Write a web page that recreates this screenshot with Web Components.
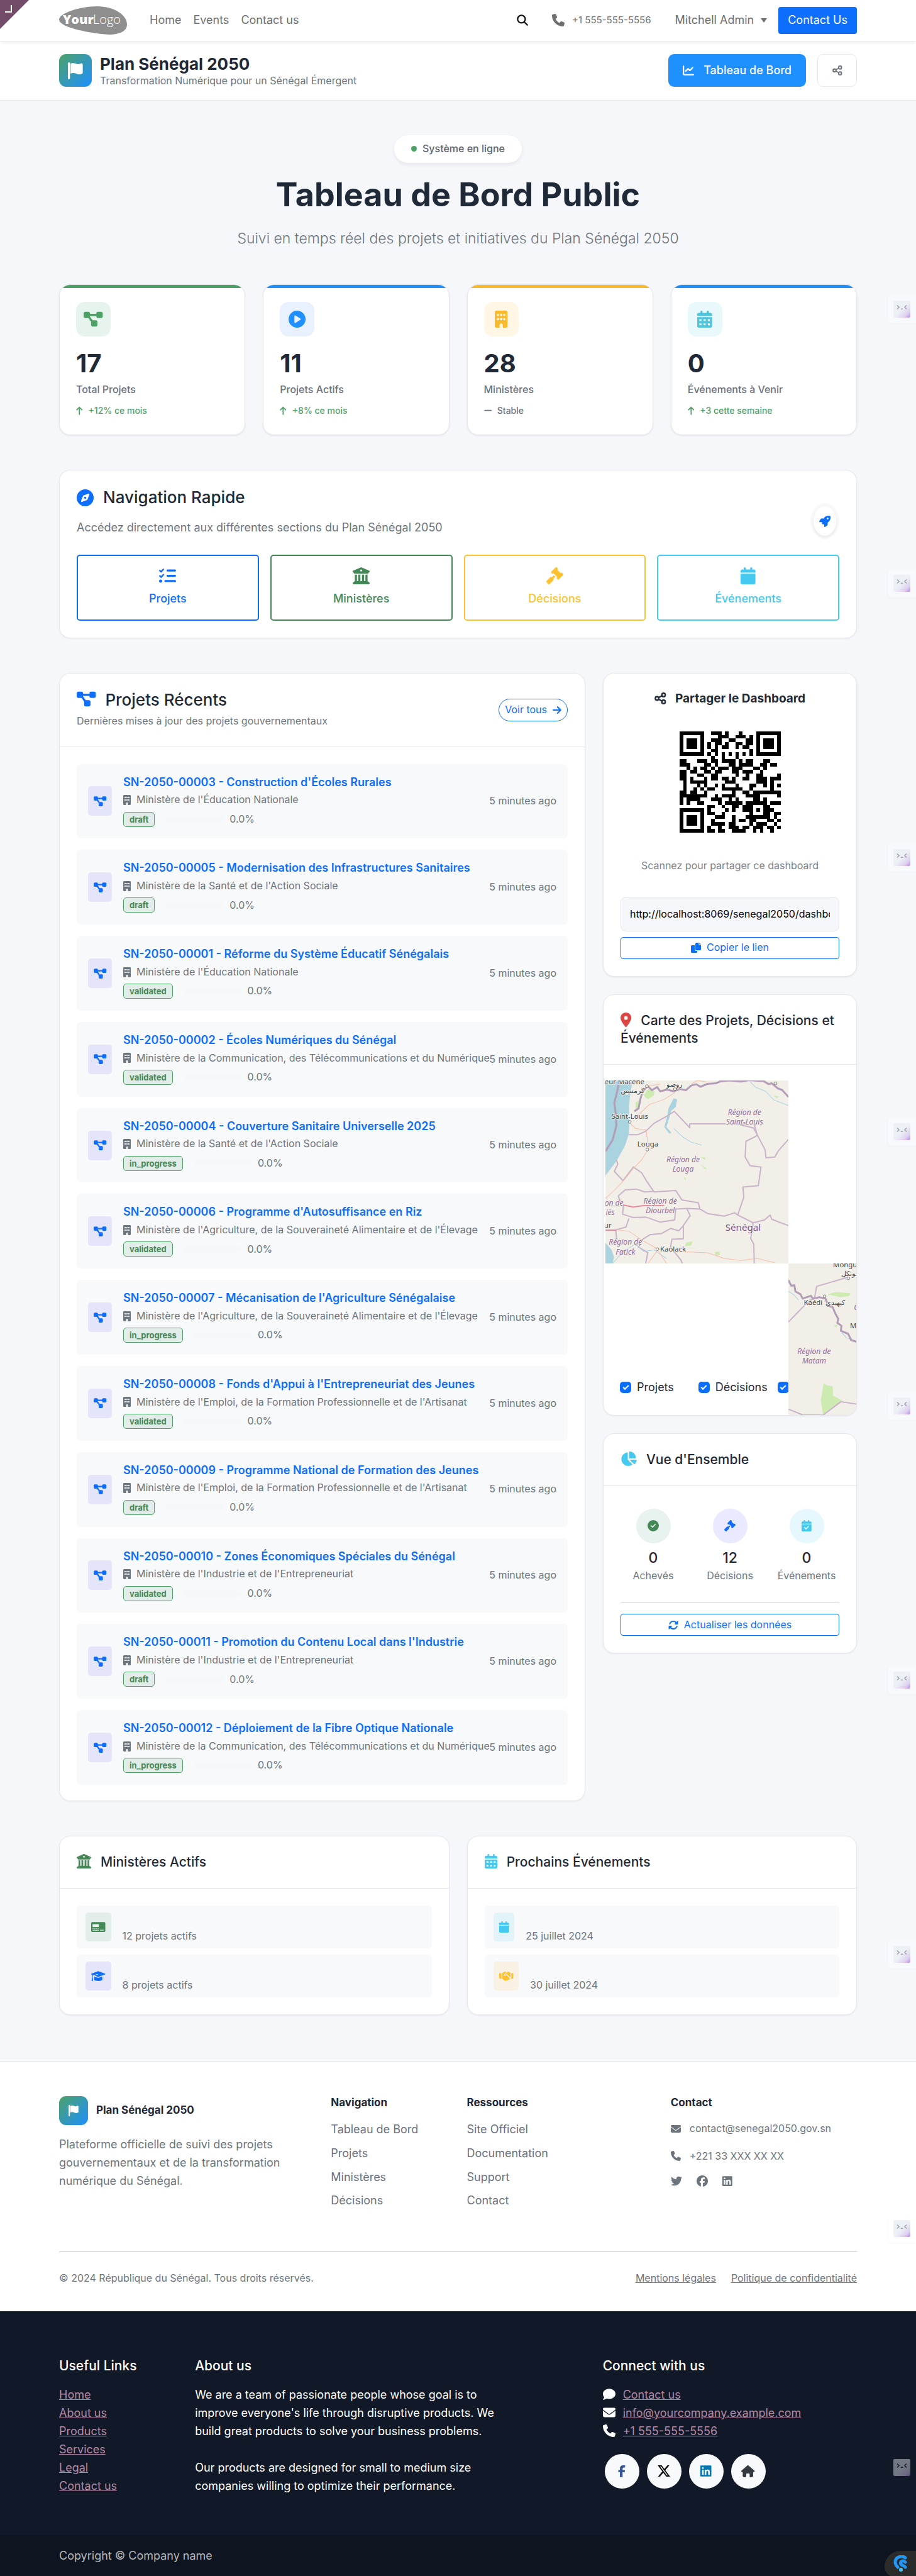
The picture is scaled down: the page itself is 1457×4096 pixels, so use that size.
<!DOCTYPE html>
<html lang="fr">
<head>
<meta charset="utf-8">
<meta name="viewport" content="width=device-width, initial-scale=1">
<title>Tableau de Bord Public - Plan Sénégal 2050</title>
<style>
  :root {
    --ink: #1f2937; --muted: #6c757d; --line: #e5e7eb; --page: #f6f7fb;
    --blue: #0d6efd; --sky: #1e90ff; --green: #448856; --leaf: #4da167;
    --amber: #ffc22e; --cyan: #45c9f0; --gutter: 94px;
  }
  body {
    margin: 0; position: relative; overflow-x: hidden; background: var(--page);
    color: var(--ink); font: 400 18px/1.6 Inter, "Noto Sans", sans-serif;
  }
  main { padding: 55px var(--gutter) 73px; }
  .stats { display: grid; grid-template-columns: repeat(4, 1fr); gap: 28px; margin: 55px 0; }
  .columns { display: grid; grid-template-columns: minmax(0, 837fr) minmax(0, 404fr); gap: 28px; align-items: start; margin: 55px 0; }
  .stack { display: grid; gap: 28px; }
  .halves { display: grid; grid-template-columns: 1fr 1fr; gap: 28px; }
  .list { display: grid; gap: 18px; padding: 27px 27px 25px; }
  .list.tight { gap: 10px; padding: 27px; }
</style>
</head>
<body>
<site-nav></site-nav>
<dash-header></dash-header>
<main>
  <hero-banner></hero-banner>
  <div class="stats">
    <stat-card icon="project" color="#4da167" tint="#e7f4ed" value="17" label="Total Projets" trend="+12% ce mois"></stat-card>
    <stat-card icon="play" color="#1e90ff" tint="#eaf1fe" value="11" label="Projets Actifs" trend="+8% ce mois"></stat-card>
    <stat-card icon="building" color="#f9b92f" tint="#fff6e5" value="28" label="Ministères" trend="Stable" flat></stat-card>
    <stat-card icon="calendar-days" color="#4ec5dc" stripe="#1e90ff" tint="#e8f8fb" value="0" label="Événements à Venir" trend="+3 cette semaine"></stat-card>
  </div>
  <quick-nav></quick-nav>
  <div class="columns">
    <panel-card>
      <span slot="icon" style="color:var(--blue)"><app-icon name="project" size="27"></app-icon></span>
      <span slot="title" style="font-size:26px">Projets Récents</span>
      <span slot="sub">Dernières mises à jour des projets gouvernementaux</span>
      <pill-link slot="action">Voir tous</pill-link>
      <div class="list" id="projects"></div>
    </panel-card>
    <div class="stack">
      <share-panel></share-panel>
      <panel-card>
        <span slot="icon" style="color:#de4545"><app-icon name="pin" size="23"></app-icon></span>
        <span slot="title">Carte des Projets, Décisions et Événements</span>
        <map-view></map-view>
      </panel-card>
      <panel-card>
        <span slot="icon" style="color:var(--cyan)"><app-icon name="pie" size="23"></app-icon></span>
        <span slot="title">Vue d'Ensemble</span>
        <overview-body></overview-body>
      </panel-card>
    </div>
  </div>
  <div class="halves">
    <panel-card>
      <span slot="icon" style="color:var(--green)"><app-icon name="columns" size="23"></app-icon></span>
      <span slot="title">Ministères Actifs</span>
      <div class="list tight">
        <mini-item icon="register" color="#448856" tint="#e3ede9">12 projets actifs</mini-item>
        <mini-item icon="cap" color="#0d6efd" tint="#e4e4fa">8 projets actifs</mini-item>
      </div>
    </panel-card>
    <panel-card>
      <span slot="icon" style="color:var(--cyan)"><app-icon name="calendar-days" size="23"></app-icon></span>
      <span slot="title">Prochains Événements</span>
      <div class="list tight">
        <mini-item icon="calendar" color="#45c9f0" tint="#e2f3f9">25 juillet 2024</mini-item>
        <mini-item icon="handshake" color="#ffc22e" tint="#f9f2e4">30 juillet 2024</mini-item>
      </div>
    </panel-card>
  </div>
</main>
<dash-footer></dash-footer>
<site-footer></site-footer>
<corner-flag></corner-flag>
<float-tabs></float-tabs>
<chat-bubble></chat-bubble>

<script>
const ICONS = {
  project: [576, '<path d="M0 80C0 53.5 21.5 32 48 32h96c26.5 0 48 21.5 48 48V96H384V80c0-26.5 21.5-48 48-48h96c26.5 0 48 21.5 48 48v96c0 26.5-21.5 48-48 48H432c-26.5 0-48-21.5-48-48V160H192v16c0 1.7-.1 3.4-.3 5L272 288h96c26.5 0 48 21.5 48 48v96c0 26.5-21.5 48-48 48H272c-26.5 0-48-21.5-48-48V336c0-1.7 .1-3.4 .3-5L144 224H48c-26.5 0-48-21.5-48-48V80z"/>'],
  play: [512, '<path d="M0 256a256 256 0 1 1 512 0A256 256 0 1 1 0 256zM188.3 147.1c-7.6 4.2-12.3 12.3-12.3 20.9V344c0 8.7 4.7 16.7 12.3 20.9s16.8 4.1 24.3-.5l144-88c7.1-4.4 11.5-12.1 11.5-20.5s-4.4-16.1-11.5-20.5l-144-88c-7.4-4.5-16.7-4.7-24.3-.5z" fill-rule="evenodd"/>'],
  building: [384, '<path fill-rule="evenodd" d="M48 0C21.5 0 0 21.5 0 48V464c0 26.5 21.5 48 48 48h96V432c0-26.5 21.5-48 48-48s48 21.5 48 48v80h96c26.5 0 48-21.5 48-48V48c0-26.5-21.5-48-48-48H48zM64 240c0-8.8 7.2-16 16-16h32c8.8 0 16 7.2 16 16v32c0 8.8-7.2 16-16 16H80c-8.8 0-16-7.2-16-16V240zm112-16h32c8.8 0 16 7.2 16 16v32c0 8.8-7.2 16-16 16H176c-8.8 0-16-7.2-16-16V240c0-8.8 7.2-16 16-16zm80 16c0-8.8 7.2-16 16-16h32c8.8 0 16 7.2 16 16v32c0 8.8-7.2 16-16 16H272c-8.8 0-16-7.2-16-16V240zM80 96h32c8.8 0 16 7.2 16 16v32c0 8.8-7.2 16-16 16H80c-8.8 0-16-7.2-16-16V112c0-8.8 7.2-16 16-16zm80 16c0-8.8 7.2-16 16-16h32c8.8 0 16 7.2 16 16v32c0 8.8-7.2 16-16 16H176c-8.8 0-16-7.2-16-16V112zM272 96h32c8.8 0 16 7.2 16 16v32c0 8.8-7.2 16-16 16H272c-8.8 0-16-7.2-16-16V112c0-8.8 7.2-16 16-16z"/>'],
  calendar: [448, '<path d="M96 32V64H48C21.5 64 0 85.5 0 112v48H448V112c0-26.5-21.5-48-48-48H352V32c0-17.7-14.3-32-32-32s-32 14.3-32 32V64H160V32c0-17.7-14.3-32-32-32S96 14.3 96 32zM448 192H0V464c0 26.5 21.5 48 48 48H400c26.5 0 48-21.5 48-48V192z"/>'],
  'calendar-days': [448, '<path fill-rule="evenodd" d="M96 32V64H48C21.5 64 0 85.5 0 112v48H448V112c0-26.5-21.5-48-48-48H352V32c0-17.7-14.3-32-32-32s-32 14.3-32 32V64H160V32c0-17.7-14.3-32-32-32S96 14.3 96 32zM448 192H0V464c0 26.5 21.5 48 48 48H400c26.5 0 48-21.5 48-48V192zM64 256h64v56H64zM192 256h64v56h-64zM320 256h64v56h-64zM64 384h64v56H64zM192 384h64v56h-64zM320 384h64v56h-64z"/>'],
  'calendar-check': [448, '<path fill-rule="evenodd" d="M96 32V64H48C21.5 64 0 85.5 0 112v48H448V112c0-26.5-21.5-48-48-48H352V32c0-17.7-14.3-32-32-32s-32 14.3-32 32V64H160V32c0-17.7-14.3-32-32-32S96 14.3 96 32zM448 192H0V464c0 26.5 21.5 48 48 48H400c26.5 0 48-21.5 48-48V192zM329 305L217 417c-9.400 9.400-24.600 9.400-33.900 0l-64-64c-9.400-9.400-9.400-24.600 0-33.900s24.600-9.400 33.900 0l47 47L295 271c9.400-9.400 24.600-9.400 33.900 0s9.400 24.600 0 33.900z"/>'],
  phone: [512, '<path d="M164.900 24.600c-7.700-18.600-28-28.500-47.400-23.200l-88 24C12.100 30.200 0 46 0 64C0 311.400 200.600 512 448 512c18 0 33.800-12.100 38.600-29.500l24-88c5.300-19.400-4.600-39.700-23.200-47.400l-96-40c-16.300-6.800-35.200-2.100-46.300 11.600L304.700 368C234.300 334.700 177.300 277.700 144 207.300L193.300 167c13.700-11.200 18.400-30 11.600-46.300l-40-96z"/>'],
  search: [512, '<g fill="none" stroke="currentColor" stroke-width="62" stroke-linecap="round"><circle cx="210" cy="210" r="172"/><path d="M335 335 478 478"/></g>'],
  chart: [512, '<path d="M32 64V400a48 48 0 0 0 48 48H480M128 288 240 176 320 256 448 128" fill="none" stroke="currentColor" stroke-width="64" stroke-linecap="round" stroke-linejoin="round"/>'],
  share: [512, '<g fill="none" stroke="currentColor" stroke-width="62"><circle cx="110" cy="256" r="74"/><circle cx="390" cy="108" r="74"/><circle cx="390" cy="404" r="74"/><path d="M176 222 324 144M176 290 324 368"/></g>'],
  flag: [448, '<rect x="0" y="0" width="62" height="512" rx="31"/><path d="M80 38c48-22 100-22 148 0 52 24 108 24 160 2 28-14 60-4 60 28v246c0 14-8 26-22 32-58 26-118 24-176-6-52-24-112-24-170 0z"/>'],
  compass: [512, '<path fill-rule="evenodd" d="M256 512A256 256 0 1 0 256 0a256 256 0 1 0 0 512zm50.700-186.900L162.400 380.600c-19.400 7.500-38.500-11.600-31-31l55.500-144.300c3.300-8.500 9.900-15.100 18.400-18.400l144.300-55.500c19.400-7.500 38.500 11.600 31 31L325.100 306.700c-3.200 8.500-9.900 15.100-18.400 18.400zM288 256a32 32 0 1 0 -64 0 32 32 0 1 0 64 0z"/>'],
  pin: [384, '<path fill-rule="evenodd" d="M215.700 499.200C267 435 384 279.400 384 192C384 86 298 0 192 0S0 86 0 192c0 87.400 117 243 168.300 307.200c12.300 15.300 35.100 15.300 47.400 0zM192 128a64 64 0 1 1 0 128 64 64 0 1 1 0-128z"/>'],
  gavel: [512, '<path d="M318.600 9.400c-12.500-12.500-32.800-12.500-45.300 0l-120 120c-12.500 12.500-12.500 32.800 0 45.300l16 16c12.500 12.500 32.800 12.500 45.300 0l4-4L325.400 293.400l-4 4c-12.500 12.500-12.500 32.800 0 45.300l16 16c12.500 12.500 32.800 12.500 45.300 0l120-120c12.500-12.500 12.500-32.800 0-45.300l-16-16c-12.500-12.500-32.800-12.500-45.300 0l-4 4L330.600 74.600l4-4c12.500-12.500 12.500-32.800 0-45.300l-16-16zm-152 288c-12.500-12.500-32.800-12.500-45.300 0l-112 112c-12.500 12.500-12.500 32.800 0 45.300l48 48c12.500 12.500 32.800 12.500 45.300 0l112-112c12.500-12.500 12.500-32.800 0-45.300l-1.400-1.400L272 285.300 226.700 240 168 298.700l-1.400-1.400z"/>'],
  columns: [512, '<path fill-rule="evenodd" d="M243.400 2.600l-224 96c-14 6-21.800 21-18.700 35.800S16.800 160 32 160v8c0 13.300 10.700 24 24 24H456c13.300 0 24-10.700 24-24v-8c15.200 0 28.300-10.700 31.300-25.600s-4.800-29.900-18.700-35.800l-224-96c-8-3.400-17.200-3.400-25.200 0zM128 224H64V420.300c-.6 .3-1.200 .7-1.800 1.100l-48 32c-11.700 7.800-17 22.400-12.900 35.900S17.900 512 32 512H480c14.100 0 26.500-9.200 30.600-22.700s-1.100-28.100-12.900-35.900l-48-32c-.6-.4-1.200-.7-1.800-1.100V224H384V416H344V224H280V416H232V224H168V416H128V224zM256 64a32 32 0 1 1 0 64 32 32 0 1 1 0-64z"/>'],
  tasks: [512, '<g fill="none" stroke="currentColor" stroke-linecap="round" stroke-linejoin="round"><path stroke-width="60" d="M254 96H482M254 256H482M190 416H482"/><path stroke-width="46" d="M24 100 62 136 130 62M24 260 62 296 130 222"/></g><circle cx="48" cy="416" r="48"/>'],
  rocket: [512, '<path fill-rule="evenodd" d="M156.600 384.900L125.700 354c-8.500-8.500-11.500-20.800-7.700-32.200c3-8.900 7-20.500 11.800-33.800L24 288c-8.600 0-16.600-4.600-20.900-12.100s-4.200-16.700 .2-24.100l52.500-88.500c13-21.900 36.500-35.300 61.900-35.300l82.300 0c2.400-4 4.800-7.700 7.200-11.300C289.100-4.100 411.100-8.100 483.900 5.300c11.600 2.100 20.600 11.200 22.800 22.800c13.400 72.900 9.300 194.800-111.400 276.700c-3.500 2.400-7.300 4.800-11.300 7.200v82.300c0 25.400-13.400 49-35.300 61.900l-88.500 52.500c-7.400 4.400-16.600 4.500-24.100 .2s-12.100-12.200-12.100-20.900V380.800c-14.100 4.900-26.400 8.900-35.700 11.900c-11.200 3.600-23.400 .5-31.800-7.800zM384 168a40 40 0 1 0 0-80 40 40 0 1 0 0 80z"/>'],
  pie: [576, '<path d="M304 240V16.600c0-9 7-16.600 16-16.600C443.700 0 544 100.300 544 224c0 9-7.600 16-16.600 16H304zM32 272C32 150.700 122.100 50.300 239 34.300c9.200-1.300 17 6.100 17 15.400V288L412.500 444.500c6.700 6.700 6.200 17.700-1.500 23.100C371.800 495.600 323.800 512 272 512C139.500 512 32 404.600 32 272zm526.400 16c9.300 0 16.600 7.800 15.400 17c-7.700 55.900-34.600 105.600-73.900 142.300c-6 5.600-15.400 5.200-21.200-.7L320 288H558.400z"/>'],
  check: [512, '<path fill-rule="evenodd" d="M256 512A256 256 0 1 0 256 0a256 256 0 1 0 0 512zM369 209L241 337c-9.400 9.400-24.600 9.400-33.900 0l-64-64c-9.400-9.400-9.400-24.600 0-33.900s24.600-9.400 33.900 0l47 47L335 175c9.400-9.400 24.600-9.400 33.900 0s9.400 24.600 0 33.900z"/>'],
  rotate: [512, '<path d="M142.900 142.900c62.200-62.200 162.700-62.500 225.300-1L327 183c-6.900 6.900-8.900 17.200-5.200 26.200s12.500 14.800 22.200 14.800H472c13.300 0 24-10.700 24-24V72c0-9.700-5.800-18.500-14.800-22.200s-19.300-1.700-26.200 5.200L413.400 96.600c-87.600-86.500-228.700-86.200-315.800 1C73.200 122 55.600 150.700 44.800 181.400c-5.900 16.700 2.900 34.900 19.500 40.800s34.900-2.900 40.800-19.500c7.700-21.800 20.200-42.300 37.800-59.800zM16 312V440c0 9.700 5.800 18.500 14.800 22.200s19.300 1.700 26.200-5.200l41.600-41.600c87.600 86.500 228.700 86.200 315.800-1c24.400-24.400 42.100-53.100 52.900-83.700c5.900-16.700-2.900-34.900-19.500-40.800s-34.900 2.900-40.800 19.500c-7.700 21.800-20.200 42.300-37.800 59.800c-62.200 62.200-162.700 62.500-225.300 1L185 329c6.900-6.900 8.900-17.200 5.200-26.200s-12.500-14.800-22.200-14.800H40c-13.300 0-24 10.700-24 24z"/>'],
  copy: [512, '<path d="M272 0H396V96a24 24 0 0 0 24 24H512V336a48 48 0 0 1-48 48H272a48 48 0 0 1-48-48V48a48 48 0 0 1 48-48zM428 0 512 88H428zM48 128H192V336a80 80 0 0 0 80 80h48v48a48 48 0 0 1-48 48H48a48 48 0 0 1-48-48V176a48 48 0 0 1 48-48z"/>'],
  right: [448, '<path d="M32 256H410M250 96 410 256 250 416" fill="none" stroke="currentColor" stroke-width="64" stroke-linecap="round" stroke-linejoin="round"/>'],
  up: [384, '<path d="M192 470V60M42 210 192 60 342 210" fill="none" stroke="currentColor" stroke-width="64" stroke-linecap="round" stroke-linejoin="round"/>'],
  minus: [448, '<path d="M40 240H408" stroke="currentColor" stroke-width="64" stroke-linecap="round"/>'],
  register: [640, '<path fill-rule="evenodd" d="M48 32H592a48 48 0 0 1 48 48V432a48 48 0 0 1-48 48H48a48 48 0 0 1-48-48V80a48 48 0 0 1 48-48zM64 128V256H352V128zM64 304v32h48v-32zM144 304v32h48v-32zM224 304v32h48v-32zM304 304v32h48v-32zM64 384v32H352v-32zM400 384v32H576v-32z"/>'],
  cap: [640, '<path d="M320 32 628 148c16 6 16 30 0 36L336 292c-10 4-22 4-32 0L150 234l160-40-8-30-208 54c-30 20-34 60-34 86 24 40 30 90 12 176H12c24-60 32-120 20-176 0-40 10-80 28-104L12 184c-16-6-16-30 0-36zM144 276l150 56c16 6 36 6 52 0l150-56 14 130c0 42-85 74-190 74s-190-32-190-74z"/>'],
  handshake: [640, '<path d="M0 128H96V384H56c-30 0-56-20-56-56zM640 128H544V384h40c30 0 56-20 56-56zM128 116c60-10 96-60 150-60 20 0 40 8 54 20L220 180c-16 18-10 54 18 64 30 10 60-10 90-44l148 152c20 22-4 56-34 40 6 26-24 50-50 32-6 30-44 44-68 22-10 30-50 40-76 18L150 384h-22zM512 116V330L346 160l-22 4c-20 30-40 52-60 48-14-4-14-18-6-26L368 84c20-18 60-26 84-6z"/>'],
  envelope: [512, '<path d="M48 64C21.500 64 0 85.500 0 112c0 15.100 7.100 29.300 19.200 38.400L236.800 313.600c11.400 8.500 27 8.500 38.400 0L492.800 150.400c12.100-9.100 19.200-23.300 19.200-38.400c0-26.500-21.500-48-48-48H48zM0 176V384c0 35.300 28.700 64 64 64H448c35.300 0 64-28.700 64-64V176L294.400 339.200c-22.800 17.100-54 17.100-76.800 0L0 176z"/>'],
  comment: [512, '<path d="M256 32C397 32 512 125 512 240S397 448 256 448c-37 0-72-6-104-18C110 460 60 480 16 480c-16 0-20-18-10-28 24-26 40-52 44-84C18 330 0 290 0 240 0 125 115 32 256 32z"/>'],
  twitter: [512, '<path d="M459.370 151.716c.325 4.548.325 9.097.325 13.645 0 138.720-105.583 298.558-298.558 298.558-59.452 0-114.680-17.219-161.137-47.106 8.447.974 16.568 1.299 25.340 1.299 49.055 0 94.213-16.568 130.274-44.832-46.132-.975-84.792-31.188-98.112-72.772 6.498.974 12.995 1.624 19.818 1.624 9.421 0 18.843-1.300 27.614-3.573-48.081-9.747-84.143-51.980-84.143-102.985v-1.299c13.969 7.797 30.214 12.670 47.431 13.319-28.264-18.843-46.781-51.005-46.781-87.391 0-19.492 5.197-37.360 14.294-52.954 51.655 63.675 129.300 105.258 216.365 109.807-1.624-7.797-2.599-15.918-2.599-24.040 0-57.828 46.782-104.934 104.934-104.934 30.213 0 57.502 12.670 76.670 33.137 23.715-4.548 46.456-13.320 66.599-25.340-7.798 24.366-24.366 44.833-46.132 57.827 21.117-2.273 41.584-8.122 60.426-16.243-14.292 20.791-32.161 39.308-52.628 54.253z"/>'],
  facebook: [512, '<path d="M512 256C512 114.600 397.400 0 256 0S0 114.600 0 256C0 376 82.700 476.800 194.200 504.500V334.200H141.400V256h52.800V222.300c0-87.100 39.400-127.500 125-127.500c16.200 0 44.200 3.200 55.700 6.400V172c-6-.6-16.500-1-29.600-1c-42 0-58.200 15.900-58.200 57.200V256h83.600l-14.400 78.200H287V510.100C413.800 494.800 512 386.900 512 256z"/>'],
  'facebook-f': [320, '<path d="M80 299.300V512H196V299.300h86.500l18-97.800H196V166.900c0-51.700 20.300-71.500 72.700-71.500c16.300 0 29.400 .4 37 1.200V7.900C291.400 4 256.400 0 236.200 0C129.300 0 80 50.500 80 159.400v42.100H14v97.800H80z"/>'],
  linkedin: [448, '<path fill-rule="evenodd" d="M416 32H31.900C14.300 32 0 46.500 0 64.300v383.400C0 465.500 14.300 480 31.900 480H416c17.600 0 32-14.500 32-32.300V64.300c0-17.800-14.400-32.300-32-32.300zM135.400 416H69V202.200h66.500V416zm-33.200-243c-21.300 0-38.500-17.300-38.500-38.500S80.900 96 102.200 96c21.200 0 38.500 17.300 38.500 38.500 0 21.300-17.200 38.500-38.500 38.500zm282.100 243h-66.400V312c0-24.800-.5-56.700-34.500-56.700-34.600 0-39.900 27-39.900 54.900V416h-66.400V202.200h63.700v29.200h.9c8.900-16.800 30.600-34.500 62.900-34.500 67.200 0 79.700 44.300 79.700 101.900V416z"/>'],
  x: [512, '<path d="M389.200 48h70.600L305.600 224.200 487 464H345L233.700 318.600 106.500 464H35.800L200.700 275.500 26.800 48H172.400L272.900 180.900 389.200 48zM364.400 421.800h39.100L151.100 88h-42L364.400 421.800z"/>'],
  house: [576, '<path d="M575.800 255.500c0 18-15 32.100-32 32.100h-32l.7 160.200c0 35.200-28.700 64.200-64 64.200H392c-17.700 0-32-14.300-32-32V384c0-17.700-14.300-32-32-32H248c-17.700 0-32 14.300-32 32v96c0 17.700-14.300 32-32 32h-56c-35.300 0-64-28.700-64-64V287.600H32c-18 0-32-14-32-32.100c0-9 3-17 10-24L266.400 8c7-7 15-8 22-8s15 2 21 7L564.800 231.500c8 7 12 15 11 24z"/>']
};

const BASE = `
  *, *::before, *::after { box-sizing: border-box; }
  :host { display: block; }
  a { color: inherit; text-decoration: none; }
  h1, h2, h3, p, ul { margin: 0; padding: 0; font-weight: inherit; font-size: inherit; }
  ul { list-style: none; }
  button, input { font: inherit; }
`;

class View extends HTMLElement {
  connectedCallback() {
    if (this.shadowRoot) return;
    this.attachShadow({ mode: 'open' }).innerHTML =
      `<style>${BASE}${this.styles()}</style>${this.markup()}`;
  }
  styles() { return ''; }
  markup() { return '<slot></slot>'; }
  at(name) { return this.getAttribute(name) || ''; }
}
const icon = (name, size) => `<app-icon name="${name}" size="${size}"></app-icon>`;

customElements.define('app-icon', class extends View {
  styles() { return ':host { display: inline-block; flex: none; line-height: 0; } svg { display: block; overflow: visible; }'; }
  markup() {
    const [w, body] = ICONS[this.at('name')];
    const h = +this.at('size');
    return `<svg aria-hidden="true" width="${w * h / 512}" height="${h}" viewBox="0 0 ${w} 512" fill="currentColor">${body}</svg>`;
  }
});

customElements.define('site-nav', class extends View {
  styles() { return `
    :host { position: relative; z-index: 2; background: #fff; box-shadow: 0 2px 6px rgba(0,0,0,.1); }
    nav { display: flex; align-items: center; height: 65px; padding: 0 var(--gutter); color: #6f6f6f; }
    .logo { display: block; width: 108px; height: 45px; margin-right: 36px; }
    .links { display: flex; gap: 19px; }
    .end { display: flex; align-items: center; margin-left: auto; }
    button { border: 0; background: none; padding: 0; color: #111; display: flex; }
    .tel { display: flex; align-items: center; gap: 12px; margin: 0 38px; font-size: 15px; }
    .user { display: flex; align-items: center; gap: 11px; margin-right: 18px; color: inherit; }
    .user i { border: 5px solid transparent; border-top: 7px solid; border-bottom: 0; }
    .cta { background: var(--blue); color: #fff; padding: 7px 15px; border-radius: 4px; }
  `; }
  markup() { return `<nav>
    <a class="logo" href="#" aria-label="YourLogo"><svg width="108" height="45" viewBox="0 0 108 45">
      <path d="M0 21C0 11 34 0 60 0 88 0 108 14 108 29 108 40 95 45 79 45 50 43 0 34 0 21z" fill="#8f8f8f"/>
      <text x="6" y="28" fill="#fff" font-family="Open Sans, sans-serif" font-size="20" font-weight="800">Your</text>
      <text x="54" y="28" fill="#fff" font-family="Open Sans, sans-serif" font-size="20" font-weight="300">Logo</text></svg></a>
    <div class="links"><a href="#">Home</a><a href="#">Events</a><a href="#">Contact us</a></div>
    <div class="end"><button aria-label="Rechercher">${icon('search', 18)}</button>
      <a class="tel" href="#">${icon('phone', 20)}<span>+1 555-555-5556</span></a>
      <button class="user">Mitchell Admin<i></i></button>
      <a class="cta" href="#">Contact Us</a></div></nav>`; }
});

customElements.define('brand-mark', class extends View {
  styles() { return `:host { display: grid; place-items: center; flex: none; width: 52px; height: 52px; border-radius: 11px; color: #fff;
      background: linear-gradient(135deg, #4da167, #1e90ff); }
    :host([small]) { width: 46px; height: 46px; }`; }
  markup() { return icon('flag', this.hasAttribute('small') ? 18 : 27); }
});

customElements.define('dash-header', class extends View {
  styles() { return `
    header { display: flex; align-items: center; gap: 13px; padding: 21px var(--gutter); background: #fff; border-bottom: 1px solid var(--line); }
    h2 { font-size: 26px; font-weight: 700; line-height: 32px; color: var(--ink); }
    p { font-size: 16px; line-height: 20px; color: var(--muted); }
    .end { display: flex; gap: 18px; margin-left: auto; }
    a { display: flex; align-items: center; gap: 15px; height: 52px; padding: 0 23px; border-radius: 9px; background: var(--sky); color: #fff; font-weight: 500; }
    button { display: grid; place-items: center; width: 63px; border: 1px solid var(--line); border-radius: 9px; background: #fff; color: var(--muted); }
  `; }
  markup() { return `<header><brand-mark></brand-mark>
    <div><h2>Plan Sénégal 2050</h2><p>Transformation Numérique pour un Sénégal Émergent</p></div>
    <div class="end"><a href="#">${icon('chart', 18)}<span>Tableau de Bord</span></a>
    <button aria-label="Partager">${icon('share', 16)}</button></div></header>`; }
});

customElements.define('hero-banner', class extends View {
  styles() { return `
    :host { display: flex; flex-direction: column; align-items: center; gap: 18px; text-align: center; }
    .pill { display: flex; align-items: center; gap: 9px; padding: 9px 27px; border-radius: 22px; background: #fff;
      font-size: 16px; font-weight: 500; color: #5b6470; box-shadow: 0 3px 6px rgba(0,0,0,.07); }
    .pill i { width: 9px; height: 9px; border-radius: 50%; background: var(--leaf); }
    h1 { font-size: 52px; font-weight: 700; line-height: 66px; }
    p { font-size: 23px; font-weight: 300; color: var(--muted); }
  `; }
  markup() { return `<div class="pill"><i></i><span>Système en ligne</span></div>
    <h1>Tableau de Bord Public</h1><p>Suivi en temps réel des projets et initiatives du Plan Sénégal 2050</p>`; }
});

customElements.define('stat-card', class extends View {
  styles() { return `
    :host { position: relative; overflow: hidden; padding: 27px 26px; background: #fff; border: 1px solid var(--line); border-radius: 18px; box-shadow: 0 1px 3px rgba(0,0,0,.08); }
    .stripe { position: absolute; inset: 0 0 auto; height: 5px; background: ${this.at('stripe') || this.at('color')}; }
    .box { display: grid; place-items: center; width: 55px; height: 55px; border-radius: 14px; background: ${this.at('tint')}; color: ${this.at('color')}; }
    .value { margin-top: 18px; font-size: 40px; font-weight: 700; line-height: 49px; }
    .label { margin-top: 5px; font-size: 16px; font-weight: 500; color: #6b7280; }
    .trend { display: flex; align-items: center; gap: 9px; margin-top: 9px; font-size: 14px; font-weight: 500; color: ${this.hasAttribute('flat') ? '#6b7280' : '#4da167'}; }
  `; }
  markup() { return `<div class="stripe"></div><div class="box">${icon(this.at('icon'), 27)}</div>
    <div class="value">${this.at('value')}</div><div class="label">${this.at('label')}</div>
    <div class="trend">${icon(this.hasAttribute('flat') ? 'minus' : 'up', 14)}<span>${this.at('trend')}</span></div>`; }
});

customElements.define('quick-nav', class extends View {
  styles() { return `
    :host { padding: 27px; background: #fff; border: 1px solid var(--line); border-radius: 18px; box-shadow: 0 1px 3px rgba(0,0,0,.06); }
    header { display: flex; justify-content: space-between; align-items: center; }
    .head { display: grid; gap: 18px; padding-bottom: 28px; }
    h2 { display: flex; align-items: center; gap: 15px; font-size: 26px; font-weight: 500; line-height: 32px; }
    h2 app-icon { color: var(--blue); }
    p { color: var(--muted); }
    .badge { padding: 5px; border-radius: 50%; background: #f8f9fa; color: var(--blue); }
    .badge span { display: grid; place-items: center; width: 36px; height: 47px; border-radius: 50%; background: #fff; box-shadow: 0 2px 4px rgba(0,0,0,.08); }
    .row { display: grid; grid-template-columns: repeat(4, 1fr); gap: 18px; }
    .row a { display: flex; flex-direction: column; align-items: center; gap: 9px; padding: 18px 0; border: 2px solid; border-radius: 5px; font-weight: 500; }
  `; }
  markup() {
    const item = (n, t, c) => `<a href="#" style="color:${c}">${icon(n, 27)}<span>${t}</span></a>`;
    return `<header><div class="head"><h2>${icon('compass', 27)}<span>Navigation Rapide</span></h2>
      <p>Accédez directement aux différentes sections du Plan Sénégal 2050</p></div>
      <div class="badge"><span>${icon('rocket', 18)}</span></div></header>
      <div class="row">${item('tasks', 'Projets', 'var(--blue)')}${item('columns', 'Ministères', 'var(--green)')}${item('gavel', 'Décisions', 'var(--amber)')}${item('calendar', 'Événements', 'var(--cyan)')}</div>`;
  }
});

customElements.define('panel-card', class extends View {
  styles() { return `
    :host { overflow: hidden; background: #fff; border: 1px solid var(--line); border-radius: 18px; box-shadow: 0 1px 3px rgba(0,0,0,.06); }
    header { display: flex; justify-content: space-between; align-items: center; padding: 27px; border-bottom: 1px solid var(--line); }
    h2 { font-size: 21px; font-weight: 500; line-height: 28px; }
    .mark { display: inline-block; vertical-align: -3px; margin-right: 15px; line-height: 0; }
    ::slotted([slot=sub]) { display: block; margin-top: 5px; font-size: 16px; color: var(--muted); }
  `; }
  markup() { return `<header><div><h2><span class="mark"><slot name="icon"></slot></span><slot name="title"></slot></h2><slot name="sub"></slot></div>
    <slot name="action"></slot></header><slot></slot>`; }
});

customElements.define('pill-link', class extends View {
  styles() { return 'a { display: flex; align-items: center; gap: 9px; padding: 4px 9px; border: 1px solid var(--blue); border-radius: 18px; color: var(--blue); font-size: 16px; }'; }
  markup() { return `<a href="#"><slot></slot>${icon('right', 16)}</a>`; }
});

customElements.define('project-item', class extends View {
  styles() { return `
    :host { display: flex; align-items: center; gap: 18px; padding: 18px; border-radius: 6px; background: #f8f9fb; font-size: 16px; color: var(--muted); white-space: nowrap; }
    .box { display: grid; place-items: center; flex: none; width: 38px; height: 47px; border-radius: 5px; background: #e4e4fa; color: var(--blue); }
    .body { display: grid; gap: 5px; flex: 1; width: 0; }
    h3 { font-size: 18px; font-weight: 600; line-height: 1.2; color: var(--blue); }
    .min { display: flex; align-items: center; gap: 9px; }
    .state { display: flex; align-items: center; }
    .badge { padding: 0 9px; border: 1px solid var(--leaf); border-radius: 5px; background: #e2ece8; color: var(--green); font-size: 13px; font-weight: 700; line-height: 22px; }
    .bar { width: 91px; height: 9px; margin: 0 10px 0 18px; border-radius: 5px; background: #f6f7fb; }
    time { margin-left: -18px; }
  `; }
  markup() { return `<div class="box">${icon('project', 18)}</div>
    <div class="body"><h3><a href="#">${this.at('name')}</a></h3>
    <div class="min">${icon('building', 16)}<span>${this.at('ministry')}</span></div>
    <div class="state"><span class="badge">${this.at('state')}</span><span class="bar"></span><span>0.0%</span></div></div>
    <time>5 minutes ago</time>`; }
});

/* Version 3-L QR symbol, byte mode, mask 5. */
function qrMatrix(text) {
  const N = 29, bits = [], put = (v, n) => { for (let i = n - 1; i >= 0; i--) bits.push(v >> i & 1); };
  const bytes = new TextEncoder().encode(text);
  put(4, 4); put(bytes.length, 8); bytes.forEach(b => put(b, 8)); put(0, 4);
  while (bits.length % 8) bits.push(0);
  const data = [];
  for (let i = 0; i < bits.length; i += 8) data.push(parseInt(bits.slice(i, i + 8).join(''), 2));
  for (let p = 236; data.length < 55; p = p === 236 ? 17 : 236) data.push(p);
  const exp = [], log = [];
  for (let i = 0, x = 1; i < 255; i++) { exp[i] = x; log[x] = i; x <<= 1; if (x > 255) x ^= 285; }
  const mul = (a, b) => a && b ? exp[(log[a] + log[b]) % 255] : 0;
  let gen = [1];
  for (let i = 0; i < 15; i++) {
    const next = [...gen, 0];
    gen.forEach((g, j) => { next[j + 1] ^= mul(g, exp[i]); });
    gen = next;
  }
  const rem = [...data, ...Array(15).fill(0)];
  for (let i = 0; i < 55; i++) { const f = rem[i]; gen.forEach((g, j) => { rem[i + j] ^= mul(g, f); }); }
  const stream = [...data, ...rem.slice(55)].flatMap(b => [7, 6, 5, 4, 3, 2, 1, 0].map(i => b >> i & 1));
  const m = Array.from({ length: N }, () => Array(N).fill(null));
  const set = (r, c, v) => { if (r >= 0 && c >= 0 && r < N && c < N) m[r][c] = v ? 1 : 0; };
  for (const [y, x] of [[3, 3], [3, 25], [25, 3]])
    for (let i = -4; i <= 4; i++) for (let j = -4; j <= 4; j++) { const d = Math.max(Math.abs(i), Math.abs(j)); set(y + i, x + j, d !== 2 && d !== 4); }
  for (let i = -2; i <= 2; i++) for (let j = -2; j <= 2; j++) set(22 + i, 22 + j, Math.max(Math.abs(i), Math.abs(j)) !== 1);
  for (let i = 8; i < 21; i++) { set(6, i, i % 2 === 0); set(i, 6, i % 2 === 0); }
  const fmt = [...'110001100011000'].map(Number);
  const first = [[8,0],[8,1],[8,2],[8,3],[8,4],[8,5],[8,7],[8,8],[7,8],[5,8],[4,8],[3,8],[2,8],[1,8],[0,8]];
  fmt.forEach((v, i) => { set(...first[i], v); if (i < 7) set(28 - i, 8, v); else set(8, 14 + i, v); });
  set(21, 8, 1);
  let k = 0, up = true;
  for (let c = 28; c > 0; c -= 2) {
    if (c === 6) c--;
    for (let i = 0; i < N; i++) for (const x of [c, c - 1]) {
      const y = up ? N - 1 - i : i;
      if (m[y][x] !== null) continue;
      const v = stream[k++] || 0;
      m[y][x] = v ^ ((x * y) % 2 + (x * y) % 3 === 0 ? 1 : 0);
    }
    up = !up;
  }
  return m;
}
customElements.define('qr-code', class extends View {
  styles() { return 'svg { display: block; }'; }
  markup() {
    const d = qrMatrix(this.at('value')).map((row, y) => row.map((v, x) => v ? `M${x} ${y}h1v1h-1z` : '').join('')).join('');
    return `<svg role="img" aria-label="QR code" width="161" height="161" viewBox="0 0 29 29" shape-rendering="crispEdges"><path d="${d}"/></svg>`;
  }
});

customElements.define('outline-button', class extends View {
  styles() { return 'button { display: flex; justify-content: center; align-items: center; gap: 9px; width: 100%; padding: 0; height: 35px; border: 1px solid var(--blue); border-radius: 4px; background: #fff; color: var(--blue); font-size: 16px; }'; }
  markup() { return `<button>${icon(this.at('icon'), 16)}<slot></slot></button>`; }
});

customElements.define('share-panel', class extends View {
  styles() { return `
    :host { display: flex; flex-direction: column; align-items: center; padding: 27px; background: #fff; border: 1px solid var(--line); border-radius: 18px; box-shadow: 0 1px 3px rgba(0,0,0,.08); font-size: 16px; }
    h2 { display: flex; align-items: center; gap: 14px; font-size: 19px; font-weight: 700; line-height: 25px; }
    qr-code { margin: 40px 0; }
    p { color: #7b838b; margin-bottom: 36px; }
    input { width: 100%; height: 55px; padding: 0 14px; border: 1px solid var(--line); border-radius: 9px; background: var(--page); color: #000; }
    outline-button { width: 100%; margin-top: 9px; }
  `; }
  markup() { return `<h2>${icon('share', 19)}<span>Partager le Dashboard</span></h2>
    <qr-code value="http://localhost:8069/senegal2050/dashboard"></qr-code>
    <p>Scannez pour partager ce dashboard</p>
    <input aria-label="Lien du dashboard" readonly value="http://localhost:8069/senegal2050/dashboard">
    <outline-button icon="copy">Copier le lien</outline-button>`; }
});

customElements.define('check-box', class extends View {
  styles() { return `
    :host { display: inline-block; }
    label { display: flex; align-items: center; gap: 9px; white-space: nowrap; }
    input { appearance: none; width: 18px; height: 18px; margin: 0; border-radius: 5px; background: var(--blue); display: grid; place-items: center; }
    input::before { content: ""; width: 9px; height: 5px; border: solid #fff; border-width: 0 0 2px 2px; transform: rotate(-45deg) translate(1px, -1px); }
  `; }
  markup() { return `<label><input type="checkbox" checked ${this.at('hint') ? `aria-label="${this.at('hint')}"` : ''}><slot></slot></label>`; }
});

customElements.define('map-view', class extends View {
  styles() { return `
    :host { position: relative; display: flex; align-items: flex-end; overflow: hidden; min-height: 557px; }
    .filters { display: flex; align-items: center; gap: 39px; padding: 0 26px 29px; }
    .filters check-box:last-child { margin-left: -23px; }
    svg { position: absolute; }
    .west { left: 3px; top: 25px; }
    .east { left: 294px; top: 316px; }
    text { font-family: "Noto Sans", sans-serif; paint-order: stroke; stroke: #f5f2ec; stroke-width: 2px; text-anchor: middle; }
    .r { font-size: 16px; font-style: italic; fill: #916b97; }
    .t { font-size: 15px; fill: #444; }
    path { fill: none; vector-effect: non-scaling-stroke; stroke-linejoin: round; }
    .b { stroke: #c9b3c9; stroke-width: 2; }
    .n { stroke: #b39cb6; stroke-width: 3; }
    .o { stroke: #f6bda9; stroke-width: 1; }
    .m { stroke: #ea8aa0; stroke-width: 2; }
    .w { stroke: #a9d3df; stroke-width: 1; }
    .s { fill: #a9d3df; } .g { fill: #cdebb0; }
    circle { fill: #fff; stroke: #555; stroke-width: 1; }
  `; }
  markup() { return `
    <div class="filters"><check-box>Projets</check-box><check-box>Décisions</check-box><check-box hint="Événements"></check-box></div>
    <svg class="west" width="291" height="291" viewBox="0 0 384 384"><rect width="384" height="384" fill="#f2efe9"/>
      <g transform="scale(.4337 .5995) translate(-65 -332)">
        <path class="s" d="M65 332H197L186 375 179 420 181 480 178 520 160 560 118 615 65 665zM65 900 95 925 106 950 100 972H65zM395 395 412 398 405 425 383 438 375 460 360 495 385 515 374 518 350 495 365 455 370 430z"/>
        <path class="g" d="M250 385 270 362 302 370 298 385 270 398zM210 410 228 400 226 425 212 432zM878 384 903 388 895 396zM455 900 487 895 480 910 450 912zM595 932H618V944H595zM526 600 550 602 545 610zM525 625 555 640 548 644zM440 668 455 675 452 682z"/>
        <path class="n" d="M133 332 122 370 108 410 115 450 118 490 100 540 65 580" />
        <path class="n" d="M205 440 225 430 235 395 245 370 270 352 290 366 315 355 330 370 365 364 395 370 425 362 455 366 480 350 505 345 525 354 560 344 600 342 625 334 670 332 720 336 760 331 830 334 855 345 870 342 900 360 920 365 951 390"/>
        <path class="b" d="M178 522 220 522 260 510 300 482 360 458 398 440 473 497 473 484 785 484 800 525 745 545 741 600 765 630 818 635 805 700 730 705 735 740 705 803"/>
        <path class="b" d="M700 484 782 498 838 575 842 603 885 600 900 580 951 538M118 610 125 625 108 650 150 683 200 635 240 655 265 685 300 722 405 717 435 750 515 760 522 782 560 798 640 807 690 795 705 803 780 830 835 820 862 803 870 818 951 840M780 830 768 885 783 905 785 972"/>
        <path class="b" d="M126 737 160 715 215 712 255 722 300 720M126 737 152 772 148 800 200 812 260 810 330 828 400 820 405 782 460 780 522 782M460 782 475 805 442 840 442 886 387 888 380 915 430 960 437 972M442 840 420 858 380 850 335 868 280 872 245 888 225 915 270 935 260 972M178 815 165 845 115 855 122 910"/>
        <path class="w" d="M395 500 440 530 480 548 530 558M760 332 790 355 840 370 880 400 951 420M100 972 150 930 210 905 250 930 300 925 360 955"/>
        <path class="o" d="M265 352 330 345M480 345 510 332 560 338M402 374 345 400 280 415 205 465M183 480 210 500 262 505 268 540 270 575 240 610 200 640 150 685 110 715 65 745M120 855 180 860 240 890 318 922 400 930 560 935 640 955 720 962 800 955 885 970M318 925 272 972M318 925 360 972"/>
        <path class="m" d="M150 768 200 775 250 770 350 770M65 856H118"/>
      </g>
      <circle cx="51" cy="87" r="3"/><circle cx="88" cy="145" r="3"/><circle cx="109" cy="354" r="3"/><circle cx="87" cy="12" r="3"/><circle cx="146" cy="18" r="3"/><circle cx="357" cy="6" r="3"/>
      <text class="t" x="40" y="8">eur Macene</text><text class="t" x="57" y="26">كرمسين</text><text class="t" x="145" y="13">روصو</text>
      <text class="t" x="51" y="80">Saint-Louis</text><text class="t" x="89" y="139">Louga</text><text class="t" x="142" y="359">Kaolack</text>
      <text class="t" x="5" y="309">ur</text>
      <text class="r" x="292" y="73">Région de</text><text class="r" x="292" y="93">Saint-Louis</text>
      <text class="r" x="163" y="172">Région de</text><text class="r" x="163" y="192">Louga</text>
      <text class="r" x="115" y="259">Région de</text><text class="r" x="115" y="279">Diourbel</text>
      <text class="r" x="18" y="263">on de</text><text class="r" x="10" y="283">iès</text>
      <text class="r" x="42" y="345">Région de</text><text class="r" x="42" y="365">Fatick</text>
      <text x="289" y="315" font-size="20" fill="#7d5583">Sénégal</text>
    </svg>
    <svg class="east" width="291" height="291" viewBox="0 0 384 384"><rect width="384" height="384" fill="#f2efe9"/>
      <g transform="scale(.4337 .5995) translate(-951 -972)">
        <path class="g" d="M1122 1390 1135 1398 1165 1402 1168 1435 1212 1452 1118 1500 1108 1450zM1140 1080 1180 1072 1252 1076 1245 1086 1200 1090zM1170 1190 1190 1186 1182 1196z"/>
        <path class="w" d="M951 1070 975 1080 1000 1100M1210 1215 1232 1232 1262 1240"/>
        <path class="b" d="M951 1177 1030 1118 1078 1090 1088 1052 1240 1020M951 1482 1020 1502 1118 1503 1205 1456 1290 1465"/>
        <path class="n" d="M951 1030 965 1050 980 1048 985 1070 1010 1080 1020 1095 1060 1085 1070 1096 1100 1090 1130 1095 1145 1120 1165 1125 1180 1150 1192 1165 1188 1180 1208 1190 1205 1208 1240 1218 1255 1240 1290 1248"/>
      </g>
      <circle cx="126" cy="31" r="3"/><circle cx="76" cy="69" r="3"/>
      <text class="t" x="119" y="8">Mongu</text><text class="t" x="130" y="26">مونكل</text>
      <text class="t" x="52" y="87">Kaédi</text><text class="t" x="98" y="87">كيهيدي</text>
      <text class="t" x="136" y="136">M</text><text class="r" x="143" y="98">G</text>
      <text class="r" x="54" y="190">Région de</text><text class="r" x="54" y="210">Matam</text>
    </svg>`; }
});

customElements.define('overview-body', class extends View {
  styles() { return `
    :host { padding: 36px 27px 27px; text-align: center; font-size: 16px; }
    .row { display: grid; grid-template-columns: repeat(3, 1fr); margin: 0 -9px; color: var(--muted); }
    .row > div { display: flex; flex-direction: column; align-items: center; }
    .dot { display: grid; place-items: center; width: 55px; height: 55px; border-radius: 50%; }
    b { margin: 9px 0 2px; font-size: 23px; font-weight: 500; line-height: 28px; color: var(--ink); }
    hr { margin: 29px 0 18px; border: 0; border-top: 1px solid #c9cbce; }
  `; }
  markup() {
    const cell = (n, c, bg, v, t) => `<div><span class="dot" style="color:${c};background:${bg}">${icon(n, 18)}</span><b>${v}</b><span>${t}</span></div>`;
    return `<div class="row">${cell('check', '#448856', '#e8f2ee', 0, 'Achevés')}${cell('gavel', '#0d6efd', '#e9e9ff', 12, 'Décisions')}${cell('calendar-check', '#45c9f0', '#e6f8fd', 0, 'Événements')}</div>
      <hr><outline-button icon="rotate">Actualiser les données</outline-button>`;
  }
});

customElements.define('mini-item', class extends View {
  styles() { return `
    :host { display: flex; gap: 18px; padding: 11px 14px; border-radius: 5px; background: #f8f9fb; color: var(--muted); font-size: 16px; line-height: 18px; align-items: flex-end; }
    .box { display: flex; align-items: center; height: 46px; padding: 0 9px; border-radius: 5px; background: ${this.at('tint')}; color: ${this.at('color')}; }
  `; }
  markup() { return `<span class="box">${icon(this.at('icon'), 18)}</span><slot></slot>`; }
});

customElements.define('dash-footer', class extends View {
  styles() { return `
    footer { padding: 55px var(--gutter) 39px; background: #fff; border-top: 1px solid var(--line); color: var(--muted); }
    .grid { display: grid; grid-template-columns: repeat(12, minmax(0, 1fr)); column-gap: 28px; min-height: 247px; }
    .about { grid-column: span 4; } .two { grid-column: span 2; } .three { grid-column: span 3; }
    .brand { display: flex; align-items: center; gap: 13px; margin-bottom: 17px; }
    h3 { font-size: 17px; font-weight: 700; line-height: 21px; color: var(--ink); }
    .two h3, .three h3 { margin-bottom: 18px; }
    .links { display: grid; gap: 9px; color: #6b7280; }
    .reach { display: grid; gap: 18px; font-size: 16px; white-space: nowrap; }
    .reach li { display: flex; align-items: center; gap: 14px; }
    .social a { display: flex; margin-right: 9px; }
    .legal { display: flex; gap: 24px; padding-top: 29px; border-top: 1px solid #c9cbce; font-size: 16px; }
    .legal span { flex: 1; } .legal a { text-decoration: underline; }
  `; }
  markup() {
    const list = (t, c) => `<div class="${c}"><h3>${t[0]}</h3><ul class="links">${t.slice(1).map(x => `<li><a href="#">${x}</a></li>`).join('')}</ul></div>`;
    return `<footer><div class="grid">
      <div class="about"><div class="brand"><brand-mark small></brand-mark><h3>Plan Sénégal 2050</h3></div>
        <p>Plateforme officielle de suivi des projets gouvernementaux et de la transformation numérique du Sénégal.</p></div>
      ${list(['Navigation', 'Tableau de Bord', 'Projets', 'Ministères', 'Décisions'], 'two')}
      ${list(['Ressources', 'Site Officiel', 'Documentation', 'Support', 'Contact'], 'three')}
      <div class="three"><h3>Contact</h3><ul class="reach"><li>${icon('envelope', 16)}<span>contact@senegal2050.gov.sn</span></li>
        <li>${icon('phone', 16)}<span>+221 33 XXX XX XX</span></li>
        <li class="social"><a href="#" aria-label="Twitter">${icon('twitter', 18)}</a><a href="#" aria-label="Facebook">${icon('facebook', 18)}</a><a href="#" aria-label="LinkedIn">${icon('linkedin', 18)}</a></li></ul></div>
      </div><div class="legal"><span>© 2024 République du Sénégal. Tous droits réservés.</span><a href="#">Mentions légales</a><a href="#">Politique de confidentialité</a></div></footer>`;
  }
});

customElements.define('site-footer', class extends View {
  styles() { return `
    :host { background: #111827; color: #fff; line-height: 29px; }
    .grid { display: grid; grid-template-columns: repeat(12, minmax(0, 1fr)); column-gap: 28px; padding: 73px var(--gutter) 64px; }
    .links { grid-column: span 2; } .about { grid-column: span 5; } .connect { grid-column: 9 / span 4; }
    h3 { margin-bottom: 17px; font-size: 21px; font-weight: 500; line-height: 28px; }
    li a { color: #b289a6; text-decoration: underline; }
    p + p { margin-top: 29px; }
    .connect li { display: flex; align-items: center; gap: 11px; }
    .connect app-icon { width: 21px; }
    .social { display: flex; gap: 12px; margin: 22px 0 0 3px; }
    .social a { display: flex; align-items: center; justify-content: center; width: 55px; height: 55px; border-radius: 50%; background: #f8f9fa; }
    .social app-icon { width: auto; }
    .copy { padding: 18px var(--gutter) 19px; background: #0e1420; color: #b6b8bb; }
  `; }
  markup() { return `<footer><div class="grid">
    <div class="links"><h3>Useful Links</h3><ul>${['Home', 'About us', 'Products', 'Services', 'Legal', 'Contact us'].map(t => `<li><a href="#">${t}</a></li>`).join('')}</ul></div>
    <div class="about"><h3>About us</h3><p>We are a team of passionate people whose goal is to improve everyone's life through disruptive products. We build great products to solve your business problems.</p>
      <p>Our products are designed for small to medium size companies willing to optimize their performance.</p></div>
    <div class="connect"><h3>Connect with us</h3><ul><li>${icon('comment', 20)}<a href="#">Contact us</a></li><li>${icon('envelope', 20)}<a href="#">info@yourcompany.example.com</a></li><li>${icon('phone', 20)}<a href="#">+1 555-555-5556</a></li></ul>
      <div class="social"><a href="#" aria-label="Facebook" style="color:#3b5998">${icon('facebook-f', 19)}</a><a href="#" aria-label="X" style="color:#000">${icon('x', 22)}</a><a href="#" aria-label="LinkedIn" style="color:#0077b5">${icon('linkedin', 20)}</a><a href="#" aria-label="Accueil" style="color:#343a40">${icon('house', 19)}</a></div></div>
    </div><div class="copy">Copyright © Company name</div></footer>`; }
});

/* Elements that float over the page. */
customElements.define('corner-flag', class extends View {
  styles() { return ':host { position: absolute; z-index: 3; top: 0; left: 0; } svg { display: block; }'; }
  markup() { return '<svg width="46" height="46"><path d="M0 0H46L0 46z" fill="#714b67"/><path d="M18 8V19H8" fill="none" stroke="#fff" stroke-width="2"/></svg>'; }
});
customElements.define('float-tabs', class extends View {
  styles() { return `
    :host { position: absolute; z-index: 1; top: 469px; right: 0; display: grid; gap: 391px; color: #98a0aa; }
    span { display: grid; place-items: center; width: 45px; height: 45px; border-radius: 6px 0 0 6px; background: rgba(255,255,255,.25); box-shadow: 0 1px 3px rgba(0,0,0,.04); }
    span:last-child { margin-top: -56px; background: none; box-shadow: none; opacity: .45; color: #111827; }
    svg { display: block; }
  `; }
  markup() {
    const face = `<svg width="27" height="27" viewBox="0 0 36 36"><defs><linearGradient id="g" x1="0" y1="0" x2="1" y2="1"><stop offset=".5" stop-color="#edf1f6"/><stop offset=".8" stop-color="#dfd0f0"/><stop offset="1" stop-color="#b98be6"/></linearGradient></defs><rect width="36" height="36" rx="3" fill="url(#g)"/><path d="M8 10 12 14 8 18M28 10 24 14 28 18M16 17q2 2 4 0" fill="none" stroke="currentColor" stroke-width="2"/></svg>`;
    return `<span>${face}</span>`.repeat(9);
  }
});
customElements.define('chat-bubble', class extends View {
  styles() { return `
    :host { position: absolute; z-index: 3; right: 0; bottom: 0; }
    button { display: grid; place-items: center; width: 50px; height: 41px; padding: 0; border: 0; border-radius: 26px 0 0 16px; background: #2b2b2b; }
  `; }
  markup() { return `<button aria-label="Assistant"><svg width="22" height="26" viewBox="0 0 22 26" fill="none" stroke="#2196f3" stroke-linecap="round">
    <path d="M19 4C14 0 3 2 3 11c0 4 2 6 4 8" stroke-width="5"/><path d="M19 11c-4-4-9-1-7 3 2 3 5 2 7 5" stroke-width="5"/><circle cx="12" cy="23" r="3" fill="#4fc3f7" stroke="none"/></svg></button>`; }
});

const MIN = {
  edu: "Ministère de l'Éducation Nationale",
  sante: "Ministère de la Santé et de l'Action Sociale",
  com: 'Ministère de la Communication, des Télécommunications et du Numérique',
  agri: "Ministère de l'Agriculture, de la Souveraineté Alimentaire et de l'Élevage",
  emploi: "Ministère de l'Emploi, de la Formation Professionnelle et de l'Artisanat",
  ind: "Ministère de l'Industrie et de l'Entrepreneuriat"
};
const PROJECTS = [
  ["03 - Construction d'Écoles Rurales", 'edu', 'draft'],
  ['05 - Modernisation des Infrastructures Sanitaires', 'sante', 'draft'],
  ['01 - Réforme du Système Éducatif Sénégalais', 'edu', 'validated'],
  ['02 - Écoles Numériques du Sénégal', 'com', 'validated'],
  ['04 - Couverture Sanitaire Universelle 2025', 'sante', 'in_progress'],
  ["06 - Programme d'Autosuffisance en Riz", 'agri', 'validated'],
  ["07 - Mécanisation de l'Agriculture Sénégalaise", 'agri', 'in_progress'],
  ["08 - Fonds d'Appui à l'Entrepreneuriat des Jeunes", 'emploi', 'validated'],
  ['09 - Programme National de Formation des Jeunes', 'emploi', 'draft'],
  ['10 - Zones Économiques Spéciales du Sénégal', 'ind', 'validated'],
  ["11 - Promotion du Contenu Local dans l'Industrie", 'ind', 'draft'],
  ['12 - Déploiement de la Fibre Optique Nationale', 'com', 'in_progress']
];
const host = document.getElementById('projects');
for (const [name, ministry, state] of PROJECTS) {
  const el = document.createElement('project-item');
  el.setAttribute('name', 'SN-2050-000' + name);
  el.setAttribute('ministry', MIN[ministry]);
  el.setAttribute('state', state);
  host.append(el);
}
</script>
</body>
</html>
